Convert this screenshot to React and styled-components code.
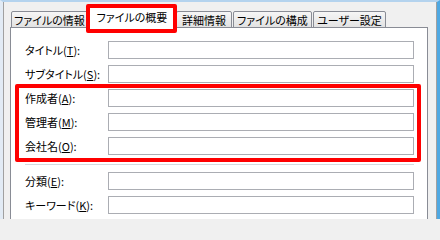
import React from 'react';
import styled, { createGlobalStyle } from 'styled-components';

const GlobalStyle = createGlobalStyle`
  html, body {
    margin: 0;
    padding: 0;
    background: #f0f0f0;
  }
`;

const Frame = styled.div`
  position: relative;
  width: 440px;
  height: 219px;
  box-sizing: border-box;
  overflow: hidden;
  border-top: 2px solid #b4d3ee;
  border-left: 3px solid #e2ebf5;
  border-right: 3px solid #4fa8e2;
  background: #f0f0f0;
  font-family: "Noto Sans CJK JP", "Noto Sans", sans-serif;
  font-feature-settings: "palt";
  font-size: 11px;
  color: #000;
`;

const Dialog = styled.div`
  height: 100%;
  border-left: 1px solid #a0a0a0;
  border-right: 1px solid #a0a0a0;
  display: flex;
  flex-direction: column;
`;

const TabStrip = styled.div`
  display: flex;
  align-items: flex-end;
  flex: none;
  height: 26px;
  padding-left: 7px;
  position: relative;
  z-index: 1;
`;

const Tab = styled.div`
  box-sizing: border-box;
  width: ${p => p.$w}px;
  height: ${p => (p.$active ? 22 : 17)}px;
  margin-left: ${p => p.$gap || 0}px;
  margin-bottom: ${p => (p.$active ? -1 : 0)}px;
  border: 1px solid #898c95;
  border-bottom: ${p => (p.$active ? 'none' : '1px solid #898c95')};
  border-radius: 2px 2px 0 0;
  background: ${p => (p.$active ? '#fff' : 'linear-gradient(#f6f6f6, #e2e2e2)')};
  display: flex;
  align-items: center;
  justify-content: center;
  white-space: nowrap;
  line-height: 1;
  padding-top: ${p => (p.$active ? 0 : 1)}px;
  padding-bottom: ${p => (p.$active ? 2 : 0)}px;
`;

const Panel = styled.div`
  flex: none;
  height: 220px;
  margin: -1px 8px 0 6px;
  border: 1px solid #898c95;
  background: #fff;
  padding: 13px 13px 0 14px;
  display: flex;
  flex-direction: column;
`;

const Row = styled.div`
  display: grid;
  grid-template-columns: 83px 1fr;
  align-items: center;
  height: 18px;
  margin-bottom: 6px;
`;

const Label = styled.label`
  white-space: nowrap;
  line-height: 1;
  u {
    text-decoration-thickness: 1px;
    text-underline-offset: 1px;
  }
`;

const Field = styled.div`
  box-sizing: border-box;
  height: 18px;
  border: 1px solid #abadb3;
  background: #fff;
`;

const Separator = styled.div`
  height: 1px;
  background: #d5d9de;
  margin: 3px 0 7px;
`;

const Highlight = styled.div`
  position: absolute;
  box-sizing: border-box;
  left: ${p => p.$x}px;
  top: ${p => p.$y}px;
  width: ${p => p.$w}px;
  height: ${p => p.$h}px;
  border: 4px solid #ff0000;
  border-radius: 2px;
  z-index: 5;
  pointer-events: none;
`;

const tabs = [
  { text: 'ファイルの情報', w: 77 },
  { text: 'ファイルの概要', w: 88, active: true },
  { text: '詳細情報', w: 56 },
  { text: 'ファイルの構成', w: 79, gap: 1 },
  { text: 'ユーザー設定', w: 73, gap: 1 },
];

const topFields = [
  ['タイトル', 'T'],
  ['サブタイトル', 'S'],
  ['作成者', 'A'],
  ['管理者', 'M'],
  ['会社名', 'O'],
];

const bottomFields = [
  ['分類', 'E'],
  ['キーワード', 'K'],
];

const FieldRow = ({ label, accel }) => (
  <Row>
    <Label>
      {label}(<u>{accel}</u>):
    </Label>
    <Field />
  </Row>
);

const App = () => (
  <>
    <GlobalStyle />
    <Frame>
      <Dialog>
        <TabStrip>
          {tabs.map(t => (
            <Tab key={t.text} $w={t.w} $active={t.active} $gap={t.gap}>
              {t.text}
            </Tab>
          ))}
        </TabStrip>
        <Panel>
          {topFields.map(([l, a]) => (
            <FieldRow key={l} label={l} accel={a} />
          ))}
          <Separator />
          {bottomFields.map(([l, a]) => (
            <FieldRow key={l} label={l} accel={a} />
          ))}
        </Panel>
      </Dialog>
      <Highlight $x={83} $y={2} $w={91} $h={29} />
      <Highlight $x={12} $y={82} $w={406} $h={78} />
    </Frame>
  </>
);

export default App;
